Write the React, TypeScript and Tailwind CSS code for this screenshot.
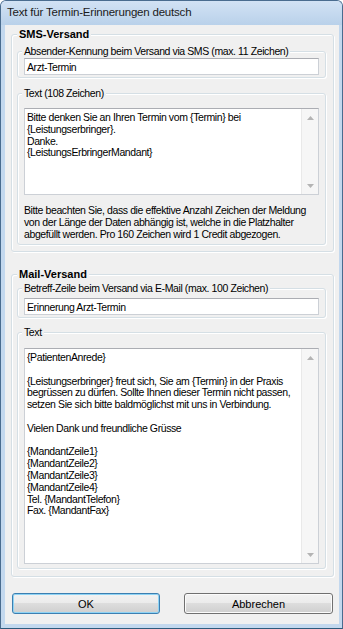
import { ReactNode } from 'react'

const smsText = `Bitte denken Sie an Ihren Termin vom {Termin} bei
{Leistungserbringer}.
Danke.
{LeistungsErbringerMandant}`

const mailText = `{PatientenAnrede}

{Leistungserbringer} freut sich, Sie am {Termin} in der Praxis
begrüssen zu dürfen. Sollte Ihnen dieser Termin nicht passen,
setzen Sie sich bitte baldmöglichst mit uns in Verbindung.

Vielen Dank und freundliche Grüsse

{MandantZeile1}
{MandantZeile2}
{MandantZeile3}
{MandantZeile4}
Tel. {MandantTelefon}
Fax. {MandantFax}`

interface GroupBoxProps {
  title: string
  bold?: boolean
  className?: string
  innerClassName?: string
  children?: ReactNode
}

// Win7 style group box: fieldset with the legend cutting the top border
function GroupBox({ title, bold = false, className = '', innerClassName = '', children }: GroupBoxProps) {
  return (
    <fieldset
      className={`rounded-[3px] border border-[#d5dfe5] shadow-[inset_1px_1px_0_#ffffff,1px_1px_0_#ffffff] ${className}`}
    >
      <legend
        className={`ml-[4px] bg-[#f0f0f0] px-[2px] ${
          bold ? 'ml-[5px] text-[11px] font-bold leading-[13px] tracking-normal' : 'leading-[12px]'
        }`}
      >
        {title}
      </legend>
      <div className={innerClassName}>{children}</div>
    </fieldset>
  )
}

function Arrow({ up }: { up?: boolean }) {
  return (
    <svg width="7" height="4" viewBox="0 0 7 4">
      <path d={up ? 'M0 4 L3.5 0 L7 4 Z' : 'M0 0 L3.5 4 L7 0 Z'} fill="#b4b4b4" />
    </svg>
  )
}

function ScrollBar() {
  return (
    <div className="flex w-[17px] shrink-0 flex-col border-l border-[#e9e9e9] bg-[#f6f6f6]">
      <div className="flex h-[17px] items-center justify-center">
        <Arrow up />
      </div>
      <div className="flex-1" />
      <div className="flex h-[17px] items-center justify-center">
        <Arrow />
      </div>
    </div>
  )
}

function TextBox({ className, text }: { className: string; text: string }) {
  return (
    <div
      className={`flex border border-[#ccd0d6] border-t-[#abadb3] bg-white ${className}`}
    >
      <div className="flex-1 whitespace-pre pl-[2px] pt-[3px] leading-[11.8px]">{text}</div>
      <ScrollBar />
    </div>
  )
}

function Input({ value, className = '' }: { value: string; className?: string }) {
  return (
    <div
      className={`flex h-[17px] items-center border border-[#ccd0d6] border-t-[#abadb3] bg-white pl-[2px] ${className}`}
    >
      {value}
    </div>
  )
}

export default function App() {
  return (
    <div className="flex h-[629px] w-[343px] flex-col overflow-hidden rounded-t-[6px] border border-[#4a6c8f] border-b-[#2c5a7c] bg-[#c3d8ee] font-['Liberation_Sans',Arial,sans-serif] text-black">
      {/* Title bar */}
      <div className="flex h-[24px] shrink-0 items-center bg-gradient-to-b from-[#d2e2f4] to-[#b9d1ea] pl-[6px] text-[11.5px] tracking-[-0.2px] text-[#1b1b1b]">
        Text für Termin-Erinnerungen deutsch
      </div>

      {/* Client area */}
      <div className="mb-[4px] ml-[4px] mr-[3px] flex flex-1 flex-col bg-[#f0f0f0] text-[10.5px] leading-[12px] tracking-[-0.4px]">
        <GroupBox
          title="SMS-Versand"
          bold
          className="ml-[6px] mr-[5px] mt-[3px] pb-[6px]"
          innerClassName="pl-[5px] pr-[7px]"
        >
          <GroupBox
            title="Absender-Kennung beim Versand via SMS (max. 11 Zeichen)"
            className="mt-[4px] pb-[2px]"
            innerClassName="px-[6px]"
          >
            <Input value="Arzt-Termin" className="mt-[1px]" />
          </GroupBox>
          <GroupBox title="Text (108 Zeichen)" className="mt-[9px] pb-[4px]" innerClassName="px-[6px]">
            <TextBox className="mt-[9px] h-[87px]" text={smsText} />
            <div className="mt-[9px] whitespace-nowrap">
              <div>Bitte beachten Sie, dass die effektive Anzahl Zeichen der Meldung</div>
              <div>von der Länge der Daten abhängig ist, welche in die Platzhalter</div>
              <div>abgefüllt werden. Pro 160 Zeichen wird 1 Credit abgezogen.</div>
            </div>
          </GroupBox>
        </GroupBox>

        <GroupBox
          title="Mail-Versand"
          bold
          className="ml-[6px] mr-[5px] mt-[16px] pb-[7px]"
          innerClassName="pl-[5px] pr-[7px]"
        >
          <GroupBox
            title="Betreff-Zeile beim Versand via E-Mail (max. 100 Zeichen)"
            className="mt-[1px] pb-[2px]"
            innerClassName="px-[6px]"
          >
            <Input value="Erinnerung Arzt-Termin" className="mt-[4px]" />
          </GroupBox>
          <GroupBox title="Text" className="mt-[8px] pb-[4px]" innerClassName="px-[6px]">
            <TextBox className="mt-[10px] h-[216px]" text={mailText} />
          </GroupBox>
        </GroupBox>

        {/* Buttons */}
        <div className="ml-[7px] mr-[6px] mt-[16px] flex justify-between tracking-normal">
          <button className="flex h-[21px] w-[148px] items-center justify-center rounded-[3px] border border-[#3c7fb1] bg-[linear-gradient(#f2f2f2_0%,#ebebeb_50%,#dddddd_50%,#cfcfcf_100%)] text-[11px] shadow-[inset_0_0_0_1px_#8fd3f4]">
            OK
          </button>
          <button className="flex h-[21px] w-[149px] items-center justify-center rounded-[3px] border border-[#707070] bg-[linear-gradient(#f2f2f2_0%,#ebebeb_50%,#dddddd_50%,#cfcfcf_100%)] text-[11px] shadow-[inset_0_0_0_1px_#fbfbfb]">
            Abbrechen
          </button>
        </div>
      </div>
    </div>
  )
}
